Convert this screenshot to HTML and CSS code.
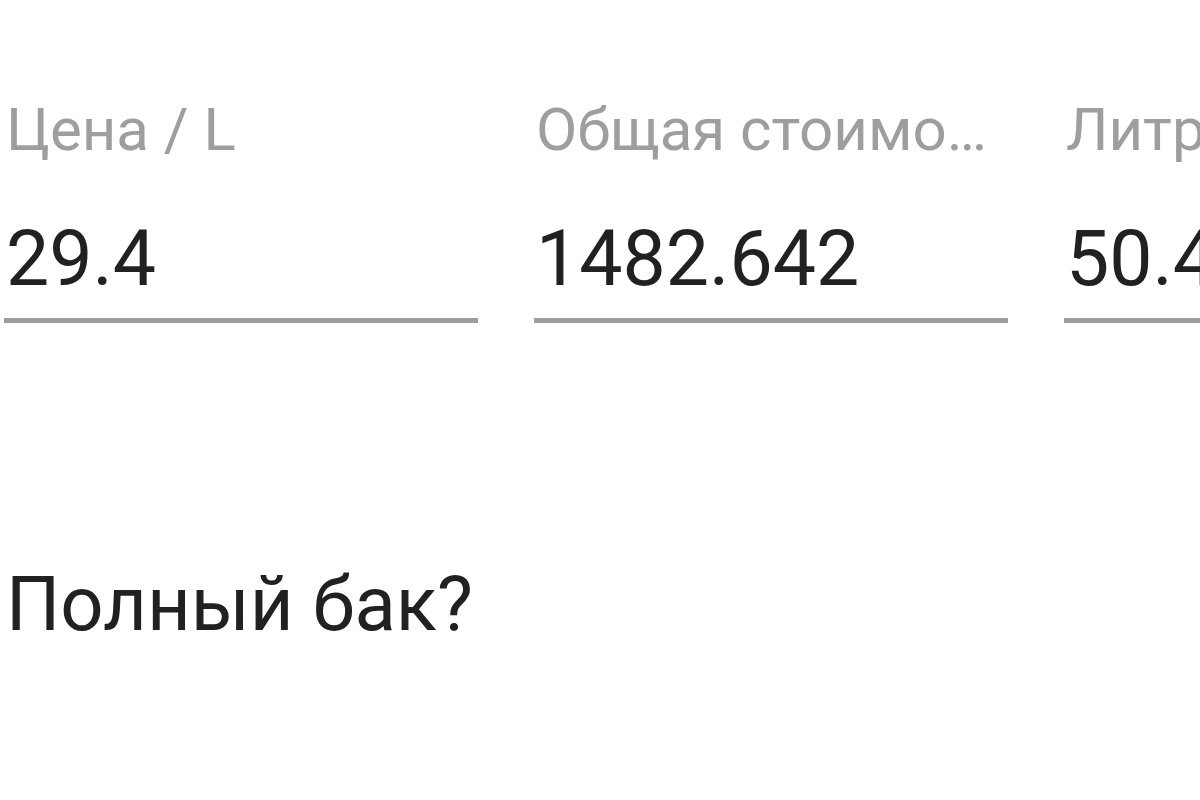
FILE: index.html
```html
<!DOCTYPE html>
<html lang="ru">
<head>
<meta charset="utf-8">
<title>Заправка</title>
<link rel="stylesheet" href="styles.css">
</head>
<body>
<div class="screen">
  <div class="fields">
    <div class="field">
      <div class="label">Цена / L</div>
      <div class="value">29.4</div>
    </div>
    <div class="field">
      <div class="label">Общая стоимость</div>
      <div class="value">1482.642</div>
    </div>
    <div class="field">
      <div class="label">Литры</div>
      <div class="value">50.43</div>
    </div>
  </div>
  <div class="question">Полный бак?</div>
</div>
</body>
</html>
```
FILE: styles.css
```css
html, body {
  margin: 0;
  padding: 0;
  background: #ffffff;
  overflow: hidden;
}
.screen {
  width: 1200px;
  height: 800px;
  overflow: hidden;
  font-family: Roboto, "Noto Sans", sans-serif;
  padding: 94px 0 0 4px;
  box-sizing: border-box;
}
.fields {
  display: flex;
  gap: 56px;
  width: 1700px;
}
.field {
  width: 474px;
  flex: none;
}
.label {
  font-size: 60px;
  line-height: 72px;
  color: #9e9e9e;
  white-space: nowrap;
  overflow: hidden;
  text-overflow: ellipsis;
  padding-left: 2px;
  padding-right: 10px;
}
.value {
  margin-top: 48px;
  font-size: 77px;
  line-height: 90px;
  color: #212121;
  padding: 0 0 14px 2px;
  border-bottom: 5px solid #9e9e9e;
}
.question {
  margin-top: 236px;
  font-size: 76px;
  line-height: 90px;
  color: #212121;
  padding-left: 2px;
}
```
